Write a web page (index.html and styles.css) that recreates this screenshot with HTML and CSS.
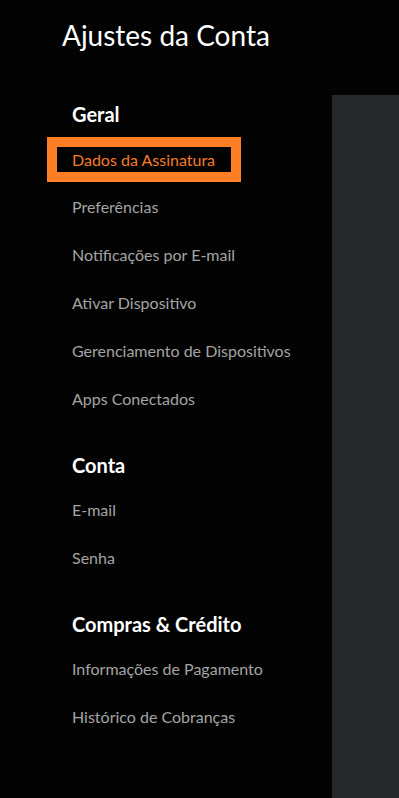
FILE: index.html
```html
<!DOCTYPE html>
<html lang="pt-BR">
<head>
<meta charset="utf-8">
<title>Ajustes da Conta</title>
<link rel="stylesheet" href="styles.css">
</head>
<body>
<div class="page">
  <aside class="sidebar">
    <h1 class="title">Ajustes da Conta</h1>
    <nav class="nav">
      <section class="group">
        <h2 class="group-title">Geral</h2>
        <ul class="items">
          <li class="item active"><span class="focus">Dados da Assinatura</span></li>
          <li class="item">Preferências</li>
          <li class="item">Notificações por E-mail</li>
          <li class="item">Ativar Dispositivo</li>
          <li class="item">Gerenciamento de Dispositivos</li>
          <li class="item">Apps Conectados</li>
        </ul>
      </section>
      <section class="group">
        <h2 class="group-title">Conta</h2>
        <ul class="items">
          <li class="item">E-mail</li>
          <li class="item">Senha</li>
        </ul>
      </section>
      <section class="group">
        <h2 class="group-title">Compras &amp; Crédito</h2>
        <ul class="items">
          <li class="item">Informações de Pagamento</li>
          <li class="item">Histórico de Cobranças</li>
        </ul>
      </section>
    </nav>
  </aside>
  <main class="panel"></main>
</div>
</body>
</html>
```
FILE: styles.css
```css
* { box-sizing: border-box; }
html, body {
  margin: 0;
  padding: 0;
  background: #030303;
  height: 100%;
}
body {
  font-family: Lato, "Liberation Sans", sans-serif;
  color: #a3a3a3;
  overflow: hidden;
}
.page {
  display: flex;
  height: 798px;
}
.sidebar {
  width: 332px;
  flex: 0 0 332px;
  padding-top: 19px;
}
.title {
  margin: 0 0 51px 62px;
  font-size: 28px;
  line-height: 32px;
  font-weight: 400;
  color: #ffffff;
}
.nav {
  display: flex;
  flex-direction: column;
  gap: 30px;
  padding-left: 72px;
}
.group-title {
  margin: 0 0 9px 0;
  font-size: 20px;
  line-height: 24px;
  font-weight: 700;
  color: #ffffff;
}
.items {
  list-style: none;
  margin: 0;
  padding: 0;
}
.item {
  height: 48px;
  line-height: 48px;
  font-size: 16px;
  color: #a3a3a3;
  white-space: nowrap;
}
.item.active {
  display: flex;
  align-items: center;
}
.focus {
  display: block;
  margin-left: -25px;
  width: 194px;
  height: 45px;
  border: 10px solid #ff7f27;
  padding-left: 15px;
  line-height: 25px;
  color: #f57a26;
}
.panel {
  flex: 1;
  margin-top: 95px;
  background: #26272b;
}
```
